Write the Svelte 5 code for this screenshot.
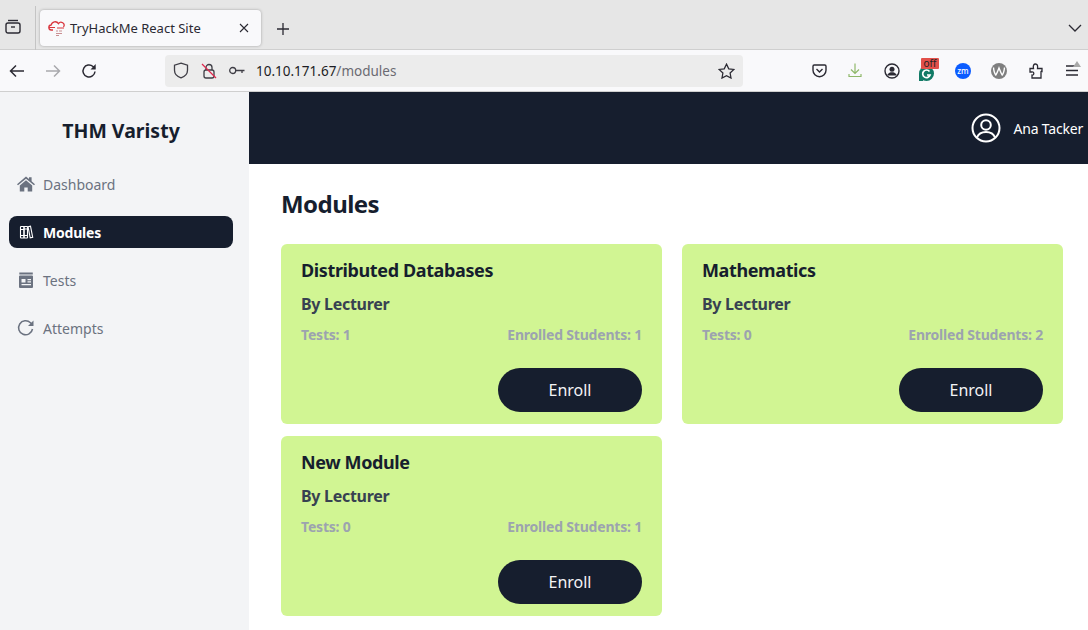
<script>
  const nav = [
    { label: 'Dashboard', icon: 'home' },
    { label: 'Modules', icon: 'books', active: true },
    { label: 'Tests', icon: 'news' },
    { label: 'Attempts', icon: 'redo' }
  ];
  const modules = [
    { name: 'Distributed Databases', tests: 1, students: 1 },
    { name: 'Mathematics', tests: 0, students: 2 },
    { name: 'New Module', tests: 0, students: 1 }
  ];
</script>

<div class="browser">
  <!-- tab strip -->
  <div class="tabstrip">
    <div class="tabgroup">
      <svg width="16" height="16" viewBox="0 0 16 16" fill="none" stroke="#2b2a33" stroke-width="1.4">
        <path d="M3 2.500h10" />
        <rect x="1" y="5" width="14" height="10" rx="2" />
        <path d="M6 9h4" />
      </svg>
    </div>
    <div class="tab">
      <svg class="favicon" width="17" height="17" viewBox="0 0 17 17" fill="none" stroke="#d9363e" stroke-width="1.3">
        <path d="M5 10H3.500a2.500 2.500 0 0 1-.3-5A4 4 0 0 1 10.500 3.600 3 3 0 0 1 15.500 7" />
        <path d="M1 7.500h6M9 8h7" stroke-width="1.1" />
        <path d="M8 11h2M11 11h3M8 13.500h6M8 15.500h3" stroke="#c98f92" stroke-width="1" />
      </svg>
      <span class="tabtitle">TryHackMe React Site</span>
      <svg class="tabclose" width="10" height="10" viewBox="0 0 10 10" stroke="#2b2a33" stroke-width="1.1">
        <path d="M1 1l8 8M9 1l-8 8" />
      </svg>
    </div>
    <svg class="newtab" width="12" height="12" viewBox="0 0 12 12" stroke="#2b2a33" stroke-width="1.3">
      <path d="M6 0v12M0 6h12" />
    </svg>
    <svg class="listall" width="14" height="8" viewBox="0 0 14 8" fill="none" stroke="#2b2a33" stroke-width="1.3">
      <path d="M1 1l6 6 6-6" />
    </svg>
  </div>

  <!-- toolbar -->
  <div class="toolbar">
    <svg class="tool back" width="16" height="14" viewBox="0 0 16 14" fill="none" stroke="#2b2a33" stroke-width="1.5">
      <path d="M15 7H2M7 1.500L1.500 7 7 12.500" />
    </svg>
    <svg class="tool forward" width="16" height="14" viewBox="0 0 16 14" fill="none" stroke="#a9a9ad" stroke-width="1.5">
      <path d="M1 7h13M9 1.500L14.500 7 9 12.500" />
    </svg>
    <svg class="tool reload" width="16" height="16" viewBox="0 0 16 16" fill="none" stroke="#2b2a33" stroke-width="1.5">
      <path d="M14 8.500A6 6 0 1 1 12 3.500L14 5.500" />
      <path d="M14.700 1v5.500h-5.200z" fill="#2b2a33" stroke="none" />
    </svg>
    <div class="urlbar">
      <svg width="16" height="17" viewBox="0 0 16 17" fill="none" stroke="#3f3e46" stroke-width="1.3">
        <path d="M8 1.200l6.500 2v5c0 3.800-3 6.400-6.500 7.600C4.500 14.600 1.500 12 1.500 8.200v-5z" />
      </svg>
      <svg class="lock" width="16" height="16" viewBox="0 0 16 16" fill="none" stroke="#3f3e46" stroke-width="1.3">
        <rect x="3" y="7" width="10" height="8" rx="2" />
        <path d="M5 7V4.500a3 3 0 0 1 6 0V7" />
        <path d="M1 1l14 14" stroke="#e0284f" />
      </svg>
      <svg class="key" width="16" height="9" viewBox="0 0 16 9" fill="none" stroke="#3f3e46" stroke-width="1.3">
        <circle cx="3.700" cy="4.500" r="3" />
        <path d="M6.700 4.500H15.500M13 4.500v2.500" />
      </svg>
      <span class="url"><span class="host">10.10.171.67</span>/modules</span>
      <svg class="star" width="17" height="16" viewBox="0 0 18 17" fill="none" stroke="#2b2a33" stroke-width="1.3">
        <path d="M9 1.200l2.400 5 5.400.7-4 3.700 1 5.400L9 13.400 4.200 16l1-5.400-4-3.700 5.400-.7z" />
      </svg>
    </div>
    <div class="addons">
      <svg class="pocket" width="15" height="14" viewBox="0 0 15 14" fill="none" stroke="#2b2a33" stroke-width="1.400">
        <path d="M1 2.200A1.200 1.200 0 0 1 2.200 1h10.600A1.200 1.200 0 0 1 14 2.200v4a6.500 6.500 0 0 1-13 0z" />
        <path d="M4.500 5l3 3 3-3" />
      </svg>
      <svg class="download" width="14" height="15" viewBox="0 0 14 15" fill="none" stroke="#8fb86a" stroke-width="1.200">
        <path d="M7 0.500v9.500M3 6.500L7 10.500l4-4M1 11v2.500h12V11" />
      </svg>
      <svg class="account" width="16" height="16" viewBox="0 0 16 16">
        <circle cx="8" cy="8" r="7" fill="none" stroke="#2b2a33" stroke-width="1.400" />
        <circle cx="8" cy="6.200" r="2.500" fill="#2b2a33" />
        <path d="M3.600 11.500c1-1.700 2.600-2.200 4.400-2.200s3.400.5 4.400 2.200v1H3.600z" fill="#2b2a33" />
      </svg>
      <div class="grammarly">
        <svg width="15" height="15" viewBox="0 0 15 15">
          <circle cx="7.500" cy="7.500" r="7.500" fill="#117a65" />
          <path d="M0 8h4v7H0z" fill="#117a65" />
          <path d="M10.500 5.500a3.800 3.800 0 1 0 .6 3.500H8" fill="none" stroke="#fff" stroke-width="1.700" />
        </svg>
        <span class="off">off</span>
      </div>
      <div class="zoom">zm</div>
      <svg class="wapp" width="16" height="16" viewBox="0 0 16 16">
        <circle cx="8" cy="8" r="8" fill="#7f7f7f" />
        <path d="M2.500 4.500c.3 3.500 1 6 2.300 7.500C6 10.500 6.800 8 8 5c1.200 3 2 5.500 3.200 7 1.300-1.500 2-4 2.300-7.500" fill="none" stroke="#fff" stroke-width="1.400" />
      </svg>
      <svg class="puzzle" width="15" height="16" viewBox="0 0 15 16" fill="none" stroke="#2b2a33" stroke-width="1.300">
        <path d="M1 5.500h3.500c-.7-3 .3-4.500 2-4.500s2.500 1.500 2 4.500H13v3c-.8-.3-1-.3-1 0v6.500H3V12c1 .3 1.800-.3 1.800-1.500S4 8.700 3 9L1 9z" />
      </svg>
      <svg class="menu" width="13" height="11" viewBox="0 0 13 11" stroke="#2b2a33" stroke-width="1.300">
        <path d="M0 1h12M0 5.500h12M0 10h12" />
      </svg>
      <span class="caret"></span>
    </div>
  </div>
</div>

<div class="page">
  <aside class="sidebar">
    <h1 class="brand">THM Varisty</h1>
    <nav>
      {#each nav as item}
        <div class="navitem" class:active={item.active}>
          <svg width="18" height="18" viewBox="0 0 18 18" fill="currentColor" stroke="none">
            {#if item.icon === 'home'}
              <path d="M0 9.200L9 1.500l3 2.500V2.300h2.600v3.900L18 9.200l-1 1.100L9 3.700 1 10.300z" />
              <path d="M2.800 10.500L9 5.300l6.200 5.200v6h-4.500v-4H7.300v4H2.800z" />
            {:else if item.icon === 'books'}
              <g fill="none" stroke="currentColor" stroke-width="1.100">
                <rect x="3.500" y="3.500" width="3.500" height="11.500" rx="0.600" />
                <rect x="7" y="3.500" width="3.500" height="11.500" rx="0.600" />
                <path d="M11 3.700l2.500-.6 2.200 11.200-2.500.6z" />
                <path d="M3.500 6.500H7M7 6h3.500M3.500 12.500H7M7 12.500h3.500" />
              </g>
            {:else if item.icon === 'news'}
              <path d="M2.300 1.500h13.500v2H2.300z" />
              <path fill-rule="evenodd" d="M3 4.500h12a1 1 0 0 1 1 1V16a1 1 0 0 1-1 1H3a1 1 0 0 1-1-1V5.500a1 1 0 0 1 1-1zM4.500 8v3.500h4V8zM10.500 8v1.300h3.500V8zM4.500 13v1.300h9.500V13zM10.500 10.200v1.300h3.500v-1.300z" />
            {:else}
              <g fill="none" stroke="currentColor" stroke-width="1.500">
                <path d="M15.500 10a7 7 0 1 1-2-6.200L15 5.300" />
              </g>
              <path d="M16.500 1.500v5.500H11z" />
            {/if}
          </svg>
          <span>{item.label}</span>
        </div>
      {/each}
    </nav>
  </aside>

  <div class="content">
    <header class="topbar">
      <svg width="30" height="30" viewBox="0 0 30 30" fill="none" stroke="#fff" stroke-width="2">
        <circle cx="15" cy="15" r="13.500" />
        <circle cx="15" cy="12" r="4.800" />
        <path d="M6 24.500c1.500-4 5-5.500 9-5.500s7.500 1.500 9 5.500" />
      </svg>
      <span class="username">Ana Tacker</span>
    </header>
    <main>
      <h2>Modules</h2>
      <div class="grid">
        {#each modules as mod}
          <section class="card">
            <h3>{mod.name}</h3>
            <p class="by">By Lecturer</p>
            <div class="stats">
              <span>Tests: {mod.tests}</span>
              <span>Enrolled Students: {mod.students}</span>
            </div>
            <div class="actions">
              <button>Enroll</button>
            </div>
          </section>
        {/each}
      </div>
    </main>
  </div>
</div>

<style>
  :global(body) {
    margin: 0;
    background: #fff;
    font-family: "Noto Sans", "Open Sans", sans-serif;
    overflow: hidden;
  }

  .browser {
    height: 92px;
    background: #e6e6e6;
    box-sizing: border-box;
  }
  .tabstrip {
    position: relative;
    height: 50px;
    display: flex;
    align-items: flex-start;
    border-bottom: 1px solid #cfcfcf;
    box-sizing: border-box;
  }
  .tabgroup {
    width: 36px;
    height: 44px;
    margin-top: 6px;
    border-right: 1px solid #c4c4c4;
    box-sizing: border-box;
    display: flex;
    align-items: center;
    justify-content: flex-start;
    padding: 0 0 4px 5px;
    margin-right: 4px;
  }
  .tab {
    width: 221px;
    height: 36px;
    margin-top: 10px;
    background: #f9f9fb;
    border-radius: 4px;
    box-shadow: 0 0 3px rgba(0, 0, 0, 0.3);
    display: flex;
    align-items: center;
    padding: 0 12px 0 8px;
    box-sizing: border-box;
  }
  .favicon {
    margin-right: 5px;
    flex: none;
  }
  .tabtitle {
    font-size: 13px;
    color: #2b2a33;
    flex: 1;
    white-space: nowrap;
  }
  .newtab {
    margin: 23px 0 0 16px;
  }
  .listall {
    position: absolute;
    right: 6px;
    top: 24px;
  }

  .toolbar {
    height: 42px;
    background: #f9f9fb;
    border-bottom: 1px solid #cfcfcf;
    box-sizing: border-box;
    display: flex;
    align-items: center;
  }
  .tool {
    flex: none;
  }
  .back {
    margin-left: 9px;
  }
  .forward {
    margin-left: 20px;
  }
  .reload {
    margin-left: 20px;
  }
  .urlbar {
    width: 578px;
    height: 32px;
    margin-left: 68px;
    background: #ececec;
    border-radius: 4px;
    display: flex;
    align-items: center;
    padding: 0 8px;
    box-sizing: border-box;
  }
  .lock {
    margin-left: 12px;
  }
  .key {
    margin-left: 12px;
  }
  .url {
    margin-left: 11px;
    font-size: 13.500px;
    color: #6a6a72;
    flex: 1;
    white-space: nowrap;
  }
  .host {
    color: #1d1d24;
  }
  .addons {
    position: relative;
    flex: 1;
    display: flex;
    align-items: center;
    height: 100%;
  }
  .pocket {
    margin-left: 69px;
  }
  .download {
    margin-left: 21px;
  }
  .account {
    margin-left: 22px;
  }
  .grammarly {
    position: relative;
    width: 15px;
    height: 15px;
    margin-left: 19px;
    margin-top: 1px;
  }
  .off {
    position: absolute;
    top: -6px;
    left: 2px;
    width: 18px;
    height: 11px;
    background: #e2504a;
    border-radius: 1px;
    font-size: 10px;
    line-height: 10px;
    text-align: center;
    color: #222;
  }
  .zoom {
    width: 16px;
    height: 16px;
    margin-left: 21px;
    border-radius: 50%;
    background: #0b5cff;
    color: #fff;
    font-size: 8px;
    font-weight: 500;
    line-height: 15px;
    text-align: center;
  }
  .wapp {
    margin-left: 20px;
  }
  .puzzle {
    margin-left: 22px;
  }
  .menu {
    margin-left: 22px;
  }
  .caret {
    position: absolute;
    right: 7px;
    top: 11px;
    border-left: 4px solid transparent;
    border-right: 4px solid transparent;
    border-bottom: 6px solid #a8a8a8;
  }

  .page {
    display: flex;
    height: 538px;
  }
  .sidebar {
    width: 249px;
    flex: none;
    background: #f3f4f6;
    padding: 0 16px 0 9px;
    box-sizing: border-box;
  }
  .brand {
    margin: 26px 0 0;
    height: 26px;
    line-height: 26px;
    font-size: 19.500px;
    font-weight: 700;
    color: #161e2e;
    text-align: center;
  }
  nav {
    margin-top: 24px;
    display: flex;
    flex-direction: column;
    gap: 16px;
  }
  .navitem {
    height: 32px;
    display: flex;
    align-items: center;
    gap: 8px;
    padding: 0 8px;
    border-radius: 8px;
    font-size: 14px;
    color: #6b7280;
  }
  .navitem.active {
    background: #161e2e;
    color: #fff;
    font-weight: 700;
    letter-spacing: -0.2px;
  }

  .content {
    flex: 1;
    display: flex;
    flex-direction: column;
  }
  .topbar {
    height: 72px;
    background: #161e2e;
    display: flex;
    align-items: center;
    justify-content: flex-end;
    padding-right: 5px;
  }
  .username {
    margin-left: 13px;
    font-size: 14px;
    letter-spacing: -0.2px;
    color: #fff;
  }
  main {
    padding: 23px 25px 0 32px;
  }
  h2 {
    margin: 0 0 23px;
    height: 34px;
    line-height: 34px;
    font-size: 24px;
    font-weight: 700;
    letter-spacing: -0.55px;
    color: #161e2e;
  }
  .grid {
    display: grid;
    grid-template-columns: 381px 381px;
    gap: 12px 20px;
  }
  .card {
    height: 180px;
    box-sizing: border-box;
    background: #d1f593;
    border-radius: 6px;
    padding: 13px 20px 12px;
    display: flex;
    flex-direction: column;
  }
  h3 {
    margin: 0;
    line-height: 26px;
    font-size: 18px;
    font-weight: 700;
    letter-spacing: -0.38px;
    color: #161e2e;
  }
  .by {
    margin: 9px 0 0;
    line-height: 24px;
    font-size: 16px;
    font-weight: 700;
    letter-spacing: -0.3px;
    color: #374151;
  }
  .stats {
    margin-top: 9px;
    display: flex;
    justify-content: space-between;
    line-height: 20px;
    font-size: 14px;
    font-weight: 700;
    letter-spacing: -0.2px;
    color: #9ca3af;
  }
  .actions {
    margin-top: auto;
    display: flex;
    justify-content: flex-end;
  }
  button {
    width: 144px;
    height: 44px;
    border: none;
    border-radius: 22px;
    background: #161e2e;
    color: #f3f4f6;
    font-family: inherit;
    font-size: 16px;
  }
</style>
